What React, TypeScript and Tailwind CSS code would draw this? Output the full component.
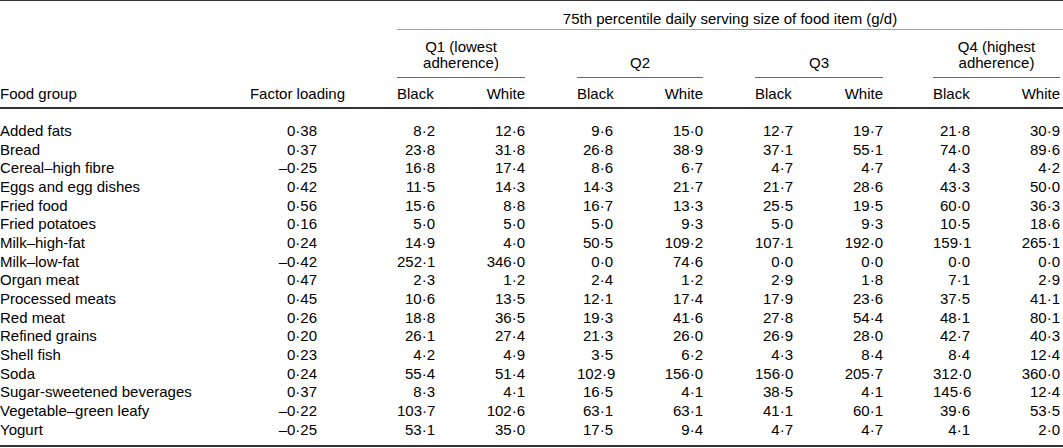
const rows: [string, string, string[]][] = [
  ["Added fats", "0.38", ["8.2", "12.6", "9.6", "15.0", "12.7", "19.7", "21.8", "30.9"]],
  ["Bread", "0.37", ["23.8", "31.8", "26.8", "38.9", "37.1", "55.1", "74.0", "89.6"]],
  ["Cereal–high fibre", "-0.25", ["16.8", "17.4", "8.6", "6.7", "4.7", "4.7", "4.3", "4.2"]],
  ["Eggs and egg dishes", "0.42", ["11.5", "14.3", "14.3", "21.7", "21.7", "28.6", "43.3", "50.0"]],
  ["Fried food", "0.56", ["15.6", "8.8", "16.7", "13.3", "25.5", "19.5", "60.0", "36.3"]],
  ["Fried potatoes", "0.16", ["5.0", "5.0", "5.0", "9.3", "5.0", "9.3", "10.5", "18.6"]],
  ["Milk–high-fat", "0.24", ["14.9", "4.0", "50.5", "109.2", "107.1", "192.0", "159.1", "265.1"]],
  ["Milk–low-fat", "-0.42", ["252.1", "346.0", "0.0", "74.6", "0.0", "0.0", "0.0", "0.0"]],
  ["Organ meat", "0.47", ["2.3", "1.2", "2.4", "1.2", "2.9", "1.8", "7.1", "2.9"]],
  ["Processed meats", "0.45", ["10.6", "13.5", "12.1", "17.4", "17.9", "23.6", "37.5", "41.1"]],
  ["Red meat", "0.26", ["18.8", "36.5", "19.3", "41.6", "27.8", "54.4", "48.1", "80.1"]],
  ["Refined grains", "0.20", ["26.1", "27.4", "21.3", "26.0", "26.9", "28.0", "42.7", "40.3"]],
  ["Shell fish", "0.23", ["4.2", "4.9", "3.5", "6.2", "4.3", "8.4", "8.4", "12.4"]],
  ["Soda", "0.24", ["55.4", "51.4", "102.9", "156.0", "156.0", "205.7", "312.0", "360.0"]],
  ["Sugar-sweetened beverages", "0.37", ["8.3", "4.1", "16.5", "4.1", "38.5", "4.1", "145.6", "12.4"]],
  ["Vegetable–green leafy", "-0.22", ["103.7", "102.6", "63.1", "63.1", "41.1", "60.1", "39.6", "53.5"]],
  ["Yogurt", "-0.25", ["53.1", "35.0", "17.5", "9.4", "4.7", "4.7", "4.1", "2.0"]],
];

// group geometry (left gap, group width, black column width)
const groups = [
  { gap: "ml-[52px]", w: "w-[128px]", b: "w-[38px]" },
  { gap: "ml-[52px]", w: "w-[126px]", b: "w-[36px]" },
  { gap: "ml-[52px]", w: "w-[128px]", b: "w-[38px]" },
  { gap: "ml-[50px]", w: "w-[127px]", b: "w-[37px]" },
];

const fmt = (s: string) => s.replace(".", "·").replace("-", "–");

export default function App() {
  return (
    <div className="w-[1063px] h-[448px] bg-white text-black text-[15px] font-['Liberation_Sans',Arial,sans-serif] overflow-hidden">
      <div className="h-px bg-[#333]" />

      {/* spanning header */}
      <div className="flex h-[28px] items-end pb-[1px]">
        <div className="w-[397px] shrink-0" />
        <div className="flex-1 text-center leading-[18px]">
          75th percentile daily serving size of food item (g/d)
        </div>
      </div>
      <div className="flex">
        <div className="w-[397px] shrink-0" />
        <div className="flex-1 h-px bg-[#a0a0a0]" />
      </div>

      {/* quartile headers */}
      <div className="flex h-[47px] items-end pb-[5.5px]">
        <div className="w-[345px] shrink-0" />
        {["Q1 (lowest|adherence)", "Q2", "Q3", "Q4 (highest|adherence)"].map((q, i) => (
          <div key={q} className={`${groups[i].gap} ${groups[i].w} shrink-0 text-center leading-[16.5px]`}>
            {q.split("|").map((l) => (
              <div key={l}>{l}</div>
            ))}
          </div>
        ))}
      </div>
      <div className="flex h-px">
        <div className="w-[345px] shrink-0" />
        {groups.map((g, i) => (
          <div key={i} className={`${g.gap} ${g.w} shrink-0 bg-[#6a6a6a]`} />
        ))}
      </div>

      {/* column headers */}
      <div className="flex h-[29px] items-end pb-[4px] leading-[18px]">
        <div className="w-[245px] shrink-0">Food group</div>
        <div className="w-[100px] shrink-0 text-right">Factor loading</div>
        {groups.map((g, i) => (
          <div key={i} className={`${g.gap} ${g.w} shrink-0 flex`}>
            <div className={`${g.b} shrink-0`}>Black</div>
            <div className="flex-1 text-right">White</div>
          </div>
        ))}
      </div>
      <div className="h-[2px] bg-[#333]" />

      {/* body */}
      <div className="pt-[13px] pb-[6px]">
        {rows.map(([name, load, vals]) => (
          <div key={name} className="flex h-[18.66px] leading-[18.66px]">
            <div className="w-[245px] shrink-0 whitespace-nowrap">{name}</div>
            <div className="w-[100px] shrink-0 text-right pr-[28px]">{fmt(load)}</div>
            {groups.map((g, i) => (
              <div key={i} className={`${g.gap} ${g.w} shrink-0 flex`}>
                <div className={`${g.b} shrink-0 text-right whitespace-nowrap`}>{fmt(vals[i * 2])}</div>
                <div className="flex-1 text-right">{fmt(vals[i * 2 + 1])}</div>
              </div>
            ))}
          </div>
        ))}
      </div>
      <div className="h-[2px] bg-[#333]" />
    </div>
  );
}
